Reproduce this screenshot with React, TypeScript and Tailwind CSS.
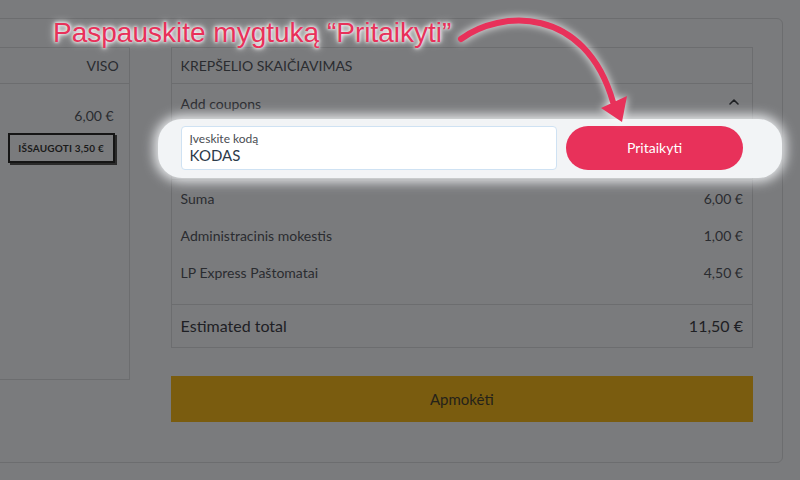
import React from "react";

const line = "border-[#6c6d6f]";

export default function App() {
  return (
    <div className="relative w-[800px] h-[480px] overflow-hidden bg-[#7a7b7d] text-[#2a2c30] font-[family-name:Lato,'Noto_Sans',sans-serif]">
      {/* card */}
      <div className={`ml-[-41px] mt-[18px] w-[824px] h-[445px] rounded-[6px] border ${line} pt-[28px] pl-[28px] pr-[29px] flex gap-[41px] items-start`}>
        {/* left panel */}
        <div className={`w-[142px] h-[333px] border ${line} flex flex-col`}>
          <div className={`h-[36px] border-b ${line} flex items-center justify-end pr-[10px] text-[14px]`}>VISO</div>
          <div className="mt-[22px] h-[20px] leading-[20px] text-right pr-[15px] text-[14px]">6,00 €</div>
          <div className="mt-[7px] flex justify-end pr-[14px]">
            <div className="w-[107px] h-[30px] border-2 border-[#151515] shadow-[2px_2px_0_#2a2a2a] flex items-center justify-center text-[10px] font-bold tracking-[0.2px] text-[#1a1a1a]">
              IŠSAUGOTI 3,50 €
            </div>
          </div>
        </div>

        {/* right column */}
        <div className="w-[584px] flex flex-col">
          <div className={`border ${line} flex flex-col`}>
            <div className={`h-[36px] border-b ${line} flex items-center pl-[9px] text-[14px]`}>KREPŠELIO SKAIČIAVIMAS</div>
            <div className="h-[38px] flex items-center justify-between pl-[9px] pr-[12px] text-[14px]">
              <span>Add coupons</span>
              <svg width="12" height="8" viewBox="0 0 12 8" className="mt-[-2px]">
                <path d="M2 6 L6 2 L10 6" fill="none" stroke="#1d1f22" strokeWidth="1.6" strokeLinecap="round" strokeLinejoin="round" />
              </svg>
            </div>
            <div className={`relative mt-[4px] pb-[9px] border-b ${line}`}>
              <div className="absolute left-[-14px] right-[-30px] top-[-7px] bottom-[1px] rounded-[24px] bg-[#f2f4f6] shadow-[0_0_12px_4px_rgba(244,246,248,0.9)]" />
              <div className="relative flex gap-[9px] pl-[9px] pr-[9px]">
                <div className="flex-1 h-[44px] rounded-[4px] border border-[#cfe2f3] bg-white flex flex-col justify-center pl-[8px]">
                  <span className="text-[12px] leading-[14px] text-[#4a4d52]">Įveskite kodą</span>
                  <span className="text-[15px] leading-[18px] text-[#2c3a4a]">KODAS</span>
                </div>
                <div className="w-[177px] h-[44px] rounded-full bg-[#e8315a] flex items-center justify-center text-white text-[14px] pb-[1px]">
                  Pritaikyti
                </div>
              </div>
            </div>
            <div className={`flex flex-col pb-[13px] border-b ${line} text-[14px]`}>
              {[
                ["Suma", "6,00 €"],
                ["Administracinis mokestis", "1,00 €"],
                ["LP Express Paštomatai", "4,50 €"],
              ].map(([a, b]) => (
                <div key={a} className="h-[37px] flex items-center justify-between pl-[9px] pr-[9px]">
                  <span>{a}</span>
                  <span>{b}</span>
                </div>
              ))}
            </div>
            <div className="h-[42px] flex items-center justify-between pl-[9px] pr-[9px] text-[16px] text-[#1e2024]">
              <span>Estimated total</span>
              <span>11,50 €</span>
            </div>
          </div>
          <div className="mt-[28px] h-[46px] bg-[#7a5c0f] flex items-center justify-center text-[15px] text-[#25221a]">
            Apmokėti
          </div>
        </div>
      </div>

      {/* annotation */}
      <div className="absolute left-[53px] top-[19px] text-[28px] leading-[28px] text-[#e8315a] whitespace-nowrap font-[family-name:'Liberation_Sans',Arial,sans-serif] [text-shadow:0_0_5px_#fff,0_0_3px_#fff,0_0_8px_#fff]">
        Paspauskite mygtuką “Pritaikyti”
      </div>
      <svg className="absolute left-0 top-0 pointer-events-none drop-shadow-[0_0_4px_#fff]" width="800" height="480" viewBox="0 0 800 480">
        <path d="M461 39 C 500 10, 585 5, 613 102" fill="none" stroke="#e8315a" strokeWidth="6" strokeLinecap="round" />
        <path d="M601 108 L627 96 L622 122 Z" fill="#e8315a" />
      </svg>
    </div>
  );
}
